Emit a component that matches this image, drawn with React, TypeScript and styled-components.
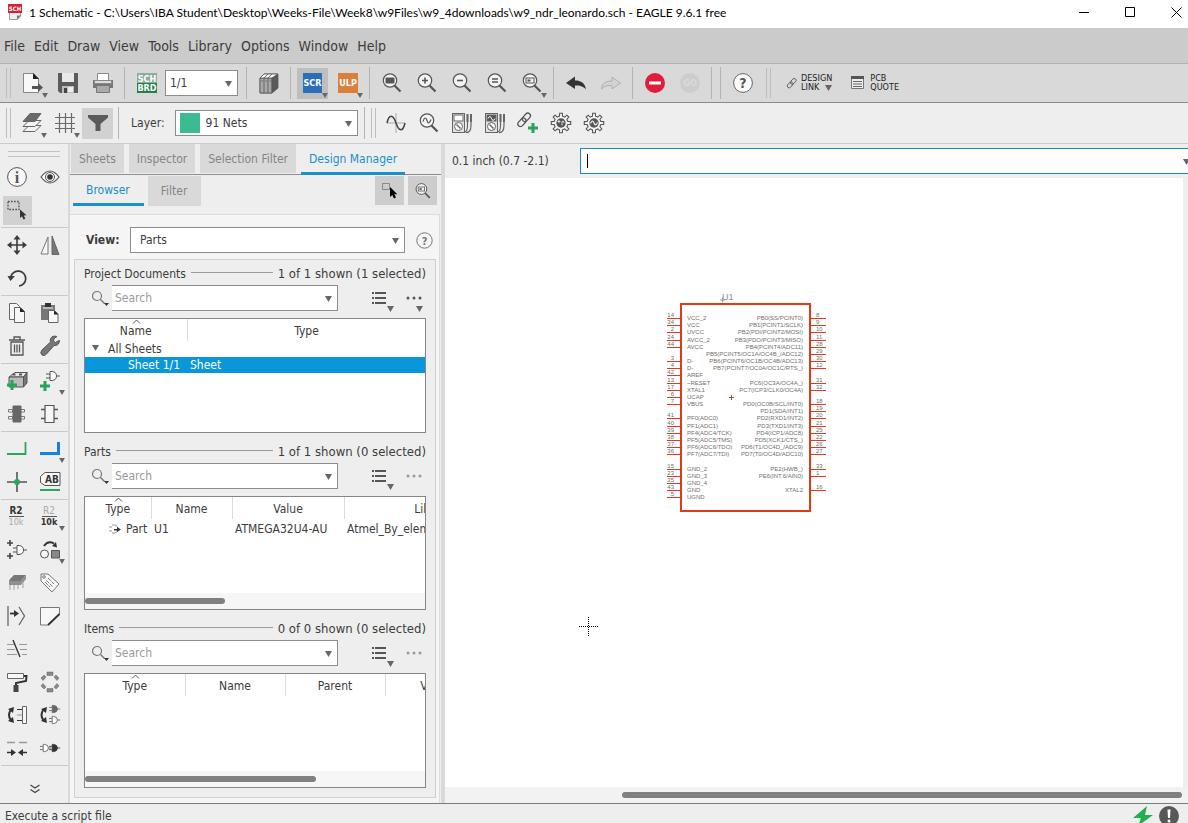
import React from "react";
import styled, { createGlobalStyle } from "styled-components";

const UI = `"DejaVu Sans Condensed", "Noto Sans", sans-serif`;

const Global = createGlobalStyle`
  *, *::before, *::after { box-sizing: border-box; }
  html, body { margin: 0; }
  body { font-family: ${UI}; font-size: 12px; line-height: 16px; color: #3c3c3c; background: #eee; }
  button, input, select { font: inherit; color: inherit; }
  button { padding: 0; border: 0; background: none; }
`;

/* ---------- shell ---------- */

const Shell = styled.div`
  display: flex;
  flex-direction: column;
  height: 100vh;
  min-height: 560px;
  overflow: hidden;
`;

const TitleBar = styled.header`
  flex: none;
  display: flex;
  align-items: center;
  height: 28px;
  padding: 0 0 4px 7px;
  background: #fff;
  color: #000;
`;

const Title = styled.h1`
  flex: 1;
  margin: 2px 0 0 6px;
  font: 400 12px/16px Lato, "Open Sans", sans-serif;
  white-space: nowrap;
`;

const WindowButtons = styled.div`
  display: flex;
  gap: 22px;
`;

const WindowButton = styled.button`
  display: grid;
  place-items: center;
  width: 24px;
  height: 24px;
`;

const MenuBar = styled.nav`
  flex: none;
  display: flex;
  align-items: center;
  gap: 9px;
  height: 36px;
  padding-left: 4px;
  background: #cbcbcb;
  border-bottom: 1px solid #b2b2b2;
  font-size: 14px;
`;

const Toolbar = styled.div<{ $light?: boolean }>`
  flex: none;
  display: flex;
  align-items: center;
  height: ${(p) => (p.$light ? 41 : 39)}px;
  padding-left: 6px;
  background: ${(p) => (p.$light ? "#eee" : "#d9d9d9")};
  border-bottom: 1px solid ${(p) => (p.$light ? "#ccc" : "#8a8a8a")};
`;

const Grip = styled.span`
  width: 5px;
  height: 30px;
  margin-right: 4px;
  border: solid #bdbdbd;
  border-width: 0 1px;
`;

const Rule = styled.span`
  width: 1px;
  height: 32px;
  margin: 0 4px;
  background: #b4b4b4;
`;

const Gap = styled.span<{ $w: number }>`
  flex: none;
  width: ${(p) => p.$w}px;
`;

const Tool = styled.button<{ $active?: boolean; $m?: number; $small?: boolean }>`
  position: relative;
  flex: none;
  display: grid;
  place-items: center;
  width: ${(p) => (p.$small ? 29 : 31)}px;
  height: ${(p) => (p.$small ? 29 : 31)}px;
  margin: 0 ${(p) => p.$m ?? 2}px;
  padding: ${(p) => (p.$small ? "0 1px 1px 0" : "0")};
  background: ${(p) => (p.$active ? "rgba(0, 0, 0, 0.12)" : "none")};
`;

const Corner = styled.svg`
  position: absolute;
  right: 0;
  bottom: 1px;
`;

const Art = styled.svg`
  display: block;
  overflow: visible;
`;

const WideTool = styled.button<{ $gap: number }>`
  display: flex;
  align-items: center;
  gap: ${(p) => p.$gap}px;
  color: #222;
  font-size: 9px;
  line-height: 9px;
  text-align: left;
`;

const WideLine = styled.span`
  display: flex;
  align-items: center;
  gap: 6px;
`;

const Field = styled.div<{ $w?: number; $focus?: boolean }>`
  position: relative;
  display: flex;
  align-items: center;
  flex: ${(p) => (p.$w ? "none" : "1")};
  width: ${(p) => (p.$w ? p.$w + "px" : "auto")};
  min-width: 0;
  height: 26px;
  overflow: hidden;
  background: #fff;
  border: 1px solid ${(p) => (p.$focus ? "#1d87c4" : "#8c8c8c")};
  border-right-width: ${(p) => (p.$focus ? 0 : 1)}px;
`;

const Select = styled.select<{ $indent?: number }>`
  flex: 1;
  width: 100%;
  height: 100%;
  padding: 0 20px 0 ${(p) => p.$indent ?? 4}px;
  border: 0;
  outline: 0;
  appearance: none;
  background: transparent;
`;

const TextInput = styled.input`
  width: 100%;
  height: 100%;
  padding: 0 20px 0 3px;
  border: 0;
  outline: 0;
  background: transparent;
  &::placeholder { color: #9a9a9a; opacity: 1; }
`;

const Drop = styled.svg<{ $right?: number }>`
  position: absolute;
  right: ${(p) => p.$right ?? 5}px;
  top: 10px;
  pointer-events: none;
`;

const Caret = styled.span`
  position: absolute;
  left: 6px;
  top: 5px;
  width: 1px;
  height: 14px;
  background: #000;
`;

const LayerLabel = styled.label`
  margin: 0 10px 0 8px;
`;

const Swatch = styled.span`
  flex: none;
  width: 20px;
  height: 20px;
  margin-left: 4px;
  background: #3dbb90;
`;

const Main = styled.main`
  flex: 1;
  display: flex;
  min-height: 0;
`;

/* ---------- palette ---------- */

const Palette = styled.aside`
  flex: none;
  width: 70px;
  padding: 7px 0 0 1px;
  overflow: hidden;
  border-right: 2px solid #d9d9d9;
`;

const PaletteGrip = styled.div`
  height: 6px;
  margin: 0 8px 4px 7px;
  border: solid #c4c4c4;
  border-width: 1px 0;
`;

const PaletteGroup = styled.div`
  display: grid;
  grid-template-columns: 33px 33px;
  grid-auto-rows: 33px;
  align-items: center;
  margin-bottom: 1px;
  border-bottom: 1px solid #c9c9c9;
`;

const More = styled.button`
  display: grid;
  place-items: center;
  width: 100%;
  height: 44px;
`;

/* ---------- side panel ---------- */

const Side = styled.section`
  flex: none;
  display: flex;
  flex-direction: column;
  width: 375px;
  border-right: 4px solid #d9d9d9;
`;

const Tabs = styled.div`
  flex: none;
  display: flex;
  align-items: flex-start;
  gap: 5px;
  height: 31px;
  padding-left: 1px;
  border-bottom: 1px solid #8f8f8f;
`;

const SubTabs = styled.div`
  flex: none;
  display: flex;
  gap: 4px;
  height: 39px;
  padding: 1px 4px 8px 3px;
`;

const Tab = styled.button<{ $on?: boolean }>`
  flex: none;
  height: ${(p) => (p.$on ? 31 : 29)}px;
  padding: ${(p) => (p.$on ? 2 : 0)}px 8px 0;
  white-space: nowrap;
  color: ${(p) => (p.$on ? "#1a8fcb" : "#858585")};
  background: ${(p) => (p.$on ? "none" : "#d9d9d9")};
  border-bottom: ${(p) => (p.$on ? "3px solid #1a8fcb" : "0")};
`;

const SubTab = styled(Tab)`
  height: 30px;
  padding: 0 14px 0 13px;
`;

const Spacer = styled.span`
  flex: 1;
`;

const SideButton = styled.button`
  display: grid;
  place-items: center;
  width: 29px;
  height: 29px;
  background: #cdcdcd;
`;

const Sheet = styled.div`
  flex: 1;
  display: flex;
  flex-direction: column;
  gap: 6px;
  min-height: 0;
  padding: 12px 3px 5px 4px;
  margin-right: 1px;
  background: #f5f5f5;
  border: 1px solid #dcdcdc;
  border-width: 1px 1px 0 0;
`;

const ViewRow = styled.div`
  flex: none;
  display: flex;
  align-items: center;
  padding: 0 3px 0 12px;
`;

const ViewLabel = styled.label`
  width: 44px;
  font-weight: 700;
`;

const HelpDot = styled.button`
  margin-left: 11px;
`;

const Group = styled.div`
  flex: 1;
  display: flex;
  flex-direction: column;
  gap: 9px;
  min-height: 0;
  padding: 4px 9px 9px;
  background: #eee;
  border: 1px solid #cfcfcf;
`;

const Block = styled.section`
  flex: 1 1 0;
  display: flex;
  flex-direction: column;
  min-height: 0;
`;

const BlockHead = styled.div`
  flex: none;
  display: flex;
  align-items: center;
  gap: 5px;
  height: 18px;
  padding-top: 2px;
  white-space: nowrap;
`;

const BlockTitle = styled.h2`
  margin: 0;
  font-size: 12px;
  font-weight: 400;
`;

const HeadLine = styled.span`
  flex: 1;
  height: 1px;
  margin-bottom: 3px;
  background: #9a9a9a;
`;

const Count = styled.span`
  font-size: 13px;
`;

const SearchRow = styled.div`
  flex: none;
  display: flex;
  align-items: center;
  margin: 3px 0 7px;
`;

const SearchIcon = styled.button`
  display: grid;
  align-items: center;
  width: 28px;
  height: 26px;
  padding-left: 8px;
`;

const SearchField = styled(Field)`
  border-left: 0;
`;

const RowTool = styled.button<{ $left: number }>`
  position: relative;
  display: grid;
  place-items: center;
  width: 20px;
  height: 26px;
  margin-left: ${(p) => p.$left}px;
`;

const RowDrop = styled.svg<{ $right: number }>`
  position: absolute;
  right: ${(p) => p.$right}px;
  bottom: -1px;
`;

const Box = styled.div`
  flex: 1;
  display: flex;
  flex-direction: column;
  min-height: 0;
  overflow: hidden;
  background: #fff;
  border: 1px solid #868686;
`;

const Grid = styled.table`
  flex: none;
  align-self: flex-start;
  table-layout: fixed;
  border-collapse: collapse;
`;

const Th = styled.th`
  position: relative;
  height: 22px;
  padding: 2px 0 0;
  font-weight: 400;
  border-right: 1px solid #dcdcdc;
`;

const SortMark = styled.svg`
  position: absolute;
  left: calc(50% - 4px);
  top: 0;
`;

const Row = styled.tr<{ $on?: boolean }>`
  color: ${(p) => (p.$on ? "#fff" : "inherit")};
  background: ${(p) => (p.$on ? "#0997d9" : "none")};
`;

const Td = styled.td<{ $indent?: number; $tall?: boolean }>`
  height: 16px;
  padding: ${(p) => (p.$tall ? 2 : 0)}px 0 0 ${(p) => p.$indent ?? 3}px;
  white-space: nowrap;
  line-height: 16px;
`;

const Inline = styled.span`
  display: flex;
  align-items: center;
  gap: 5px;
`;

const Track = styled.div`
  flex: none;
  height: 16px;
  margin-top: auto;
  padding: 5px 0;
  background: #f6f6f6;
`;

const Thumb = styled.div<{ $w: number }>`
  width: ${(p) => p.$w}px;
  height: 6px;
  border-radius: 3px;
  background: #808080;
`;

/* ---------- editor ---------- */

const Editor = styled.section`
  flex: 1;
  display: flex;
  flex-direction: column;
  min-width: 0;
`;

const CommandRow = styled.div`
  flex: none;
  display: flex;
  align-items: center;
  height: 34px;
  padding-left: 7px;
`;

const Coords = styled.label`
  width: 128px;
`;

const Canvas = styled.div`
  position: relative;
  flex: 1;
  min-height: 0;
  margin-right: 5px;
  overflow: hidden;
  background: #fff;
`;

const Placed = styled.svg<{ $x: number; $y: number }>`
  position: absolute;
  left: ${(p) => p.$x}px;
  top: ${(p) => p.$y}px;
`;

const CanvasTrack = styled.div`
  flex: none;
  display: flex;
  justify-content: flex-end;
  height: 16px;
  padding: 5px 6px 5px 0;
  background: #f2f2f2;
`;

const CanvasThumb = styled.div`
  width: 76%;
  height: 6px;
  border-radius: 3px;
  background: #808080;
`;

const StatusBar = styled.footer`
  flex: none;
  display: flex;
  align-items: flex-start;
  gap: 6px;
  height: 20px;
  overflow: hidden;
  padding: 2px 9px 0 5px;
  border-top: 1px solid #7c7c7c;
`;

const StatusText = styled.span`
  flex: 1;
  padding-top: 2px;
  line-height: 16px;
`;

/* ---------- icons ---------- */

const D = "#555";

const gear = (() => {
  const pts: string[] = [];
  for (let i = 0; i < 8; i++) {
    const a = (i * Math.PI) / 4;
    const steps: [number, number][] = [[-0.22, 7], [-0.14, 9.8], [0.14, 9.8], [0.22, 7]];
    for (const [da, r] of steps) {
      pts.push(`${(10 + r * Math.cos(a + da)).toFixed(2)},${(10 + r * Math.sin(a + da)).toFixed(2)}`);
    }
  }
  return pts.join(" ");
})();

const Lens = ({ children }: { children?: React.ReactNode }) => (
  <>
    <path d="M12.5 12.5 18.5 18.5" stroke={D} strokeWidth="2.2" />
    <circle cx="8" cy="7.5" r="6.7" fill="#f4f4f4" stroke={D} strokeWidth="1.2" />
    {children}
  </>
);

const Chain = () => (
  <g fill="none" stroke={D} strokeWidth="1.3" transform="rotate(-48 8 8)">
    <rect x="-1" y="5" width="10" height="5.6" rx="2.8" />
    <rect x="6" y="5" width="10" height="5.6" rx="2.8" />
  </g>
);

const Meter = ({ dark }: { dark?: boolean }) => (
  <g fill="none" stroke="#666">
    <rect x="0.5" y="0.5" width="12" height="19" fill="#e2e2e2" />
    <rect x="2" y="2" width="9" height="6" fill={dark ? "#555" : "#fff"} />
    {dark && <path d="M3 5.5q2-4 3.500 0t3.500 0" stroke="#fff" />}
    <circle cx="6.500" cy="13.500" r="4" fill="#fff" />
    <path d="M4.500 11.500l4 4" strokeWidth="1.400" />
    <path d="M15.500 1v11q0 7-3 7M19 1v11q0 8-5 7.500" strokeWidth="1.200" />
    <path d="M15.500 1v8M19 1v8" strokeWidth="2" />
  </g>
);

const Gate = ({ x, y, fill = "#fff", s = 1 }: { x: number; y: number; fill?: string; s?: number }) => (
  <g transform={`translate(${x} ${y}) scale(${s})`} stroke={fill === "#fff" ? D : fill} fill={fill}>
    <path d="M0 3h4M0 7h4M10 5h4" />
    <path d="M4 0.500h2q4.500 0.500 4.500 4.500t-4.500 4.500h-2z" />
  </g>
);

const Plus = ({ x, y, r = 5, c = "#27a35a" }: { x: number; y: number; r?: number; c?: string }) => (
  <path d={`M${x - r} ${y}h${2 * r}M${x} ${y - r}v${2 * r}`} stroke={c} strokeWidth={r > 3 ? 3 : 1.6} />
);

const Tag = ({ x, y, s, c, children, w = 700 }: { x: number; y: number; s: number; c: string; children: string; w?: number }) => (
  <text x={x} y={y} fontSize={s} fontWeight={w} fill={c} textAnchor="middle" fontFamily={UI}>
    {children}
  </text>
);

const art: Record<string, React.ReactNode> = {
  new: (
    <>
      <path d="M0.500 0.500h10l5 5v14h-15z" fill="#f8f8f8" stroke="#888" />
      <path d="M10 0v6h6z" fill="#222" />
      <path d="M9 13h6v-3l5 4.500-5 4.500v-3h-6z" fill={D} />
    </>
  ),
  save: (
    <>
      <path d="M0 0h20v20H2l-2-2z" fill="#5c5c5c" />
      <path d="M4 0h12v9H4z" fill="#e9e9e9" />
      <path d="M4 13h12v7H4z" fill="#bbb" />
      <path d="M6 15h3v5H6z" fill="#444" />
      <path d="M10 14h5v5h-5z" fill="#eee" />
    </>
  ),
  print: (
    <>
      <path d="M4.500 0.500h11v7h-11z" fill="#fff" stroke="#888" />
      <path d="M0 7h4v3h12V7h4v8H0z" fill="#777" />
      <path d="M1.500 7.500h17v3h-17z" fill="#ddd" stroke="#888" />
      <path d="M3.500 12.500h13v7h-13z" fill="#aaa" stroke="#777" />
    </>
  ),
  schbrd: (
    <>
      <path d="M0 0h20v10H0z" fill="#8fae99" />
      <path d="M0 10h20v10H0z" fill="#24804a" />
      <Tag x={10} y={9} s={9} c="#fff">SCH</Tag>
      <Tag x={10} y={18} s={9} c="#fff">BRD</Tag>
    </>
  ),
  library: (
    <g stroke="#555" strokeWidth="0.800">
      <path d="M1 5l4-4h13l-1 3v12l-4 4H1z" fill="#777" />
      <path d="M1 5h12v15H1zM5 5v15M9 5v15" fill="#a8a8a8" />
      <path d="M1 5l4-4h14l-5 4z" fill="#f2f2f2" />
      <path d="M5 5l4-4M9 5l4-4M2.500 8h1.500M6.500 8h1.500M10.500 8h1.500" fill="none" />
      <path d="M13 5l6-4v14l-6 5z" fill="#5a5a5a" />
    </g>
  ),
  scr: (
    <>
      <path d="M0 0h19v20H0z" fill="#2a6fb8" />
      <Tag x={9.5} y={13} s={9} c="#fff">SCR</Tag>
    </>
  ),
  ulp: (
    <>
      <path d="M0 0h20v20H0z" fill="#d9813c" />
      <Tag x={10} y={13} s={9} c="#fff">ULP</Tag>
    </>
  ),
  fit: <Lens><rect x="3.500" y="4.500" width="9" height="6" rx="1" fill="#555" /></Lens>,
  zin: <Lens><path d="M5 7.500h6M8 4.500v6" stroke={D} strokeWidth="1.600" /></Lens>,
  zout: <Lens><path d="M5 7.500h6" stroke={D} strokeWidth="1.600" /></Lens>,
  zeq: <Lens><path d="M5 6h6M5 9h6" stroke={D} strokeWidth="1.500" /></Lens>,
  zsel: (
    <Lens>
      <rect x="4" y="5" width="8" height="5" fill="none" stroke={D} />
      <path d="M5.500 6.500h3v2h-3z" fill={D} />
    </Lens>
  ),
  undo: <path d="M0 10 9 3.500V7.500C15 7.500 19 10 20 16.500 17 13 14 12.500 9 12.500V16z" fill="#333" />,
  redo: <path d="M19.500 10 11 4V8C5 8 1 10 0.500 16 3 13 6 12.500 11 12.500V16z" fill="#d2d2d2" stroke="#b0b0b0" />,
  stop: (
    <>
      <circle cx="10" cy="10" r="10" fill="#df1e3e" />
      <path d="M4 8.500h12v3H4z" fill="#fff" />
    </>
  ),
  go: (
    <>
      <circle cx="10" cy="10" r="10" fill="#cdcdcd" />
      <Tag x={10} y={13} s={9} c="#dadada">GO</Tag>
    </>
  ),
  help: (
    <>
      <circle cx="10" cy="10" r="9.400" fill="#fafafa" stroke="#666" />
      <Tag x={10} y={15} s={14} c="#555">?</Tag>
    </>
  ),
  layers: (
    <g stroke="#666" strokeLinejoin="round">
      <path d="M1 18.500 7 12.500h12l-6 6z" fill="#f4f4f4" />
      <path d="M1 13.500 7 7.500h12l-6 6z" fill="#f4f4f4" />
      <path d="M1 8.500 8 0.500h11l-6 8z" fill="#6a6a6a" />
    </g>
  ),
  grid: <path d="M4.500 0v20M10.500 0v20M16.500 0v20M0 4.500h20M0 10.500h20M0 15.500h20" stroke="#6a6a6a" strokeWidth="1.200" />,
  filter: <path d="M0 2h20v2.500L12.500 11v7h-5v-7L0 4.500z" fill="#5a5a5a" />,
  wave: (
    <>
      <path d="M10 0v20M1 10h18" stroke="#aaa" />
      <path d="M1 10C3 1 7 1 10 10s7 9 9 0" fill="none" stroke="#444" strokeWidth="1.500" />
    </>
  ),
  lenswave: (
    <Lens>
      <path d="M4 8.500c1.500-4.500 3-4.500 4-1s2.500 3 4-1" fill="none" stroke={D} strokeWidth="1.200" />
    </Lens>
  ),
  meter: <Meter />,
  meterDark: <Meter dark />,
  chainPlus: (
    <>
      <g transform="translate(-1 -1) scale(0.950)"><Chain /></g>
      <Plus x={15} y={15} />
    </>
  ),
  gearSource: (
    <>
      <polygon points={gear} fill="#f4f4f4" stroke={D} strokeWidth="1.100" />
      <circle cx="10" cy="10" r="4.700" fill={D} />
      <path d="M6.500 8.500h3M8 7v3M11 12.500v-4q2-1.500 2 1.500" stroke="#ddd" fill="none" />
    </>
  ),
  gearWave: (
    <>
      <polygon points={gear} fill="#f4f4f4" stroke={D} strokeWidth="1.100" />
      <circle cx="10" cy="10" r="4.700" fill={D} />
      <path d="M6.500 10.500q2-4.500 3.500-0.500t3.500-0.500" stroke="#eee" fill="none" strokeWidth="1.200" />
    </>
  ),
  info: (
    <>
      <circle cx="10" cy="10" r="9.400" fill="#f7f7f7" stroke="#555" />
      <text x="10" y="15.500" fontSize="16" fontWeight="700" textAnchor="middle" fill="#555" fontFamily="Liberation Serif, serif">i</text>
    </>
  ),
  eye: (
    <>
      <path d="M1 10q9-12 18 0q-9 12-18 0z" fill="#f7f7f7" stroke="#555" strokeWidth="1.200" />
      <circle cx="10" cy="10" r="4.500" fill="none" stroke="#555" />
      <circle cx="10" cy="10" r="2.800" fill="#333" />
    </>
  ),
  marquee: (
    <>
      <path d="M1 1.500h11v8H1z" fill="none" stroke="#555" strokeWidth="1.300" strokeDasharray="1.700 1.300" />
      <path d="M13 9.500v8.500l2-1.800 1.500 3.300 1.800-.8-1.500-3.200 2.700-.3z" fill="#333" />
    </>
  ),
  move: (
    <path d="M10 0l3.500 4.500h-2.700v4.700h4.700v-2.700l4.500 3.500-4.500 3.500v-2.700h-4.700v4.700h2.700l-3.500 4.500-3.500-4.500h2.700v-4.700h-4.700v2.700l-4.500-3.500 4.500-3.500v2.700h4.700v-4.700h-2.700z" fill="#3c3c3c" />
  ),
  mirror: (
    <>
      <path d="M8 2v17H1z" fill="#f7f7f7" stroke="#777" />
      <path d="M12 1v18.500h7z" fill="#777" stroke="#666" />
    </>
  ),
  rotate: (
    <>
      <path d="M4 8.500A7.500 7.500 0 1 1 12 18" fill="none" stroke="#3c3c3c" strokeWidth="1.700" />
      <path d="M0.500 8h7.500l-4.500 5z" fill="#3c3c3c" />
    </>
  ),
  copy: (
    <g fill="#f7f7f7" stroke="#666">
      <path d="M2.500 0.500h7l3 3v13h-10z" />
      <path d="M7.500 4.500h6l4 4v11h-10z" />
      <path d="M13 4.500v4.500h5z" fill="#222" stroke="none" />
    </g>
  ),
  paste: (
    <>
      <path d="M1 2h14v15H1z" fill="#777" />
      <path d="M5 0h6v4H5z" fill="#333" />
      <path d="M3 4h10v2H3z" fill="#bbb" />
      <path d="M8.500 7.500h6l3.500 3.500v8.500h-9.500z" fill="#f7f7f7" stroke="#666" />
      <path d="M14 7.500v4h4.500z" fill="#222" />
    </>
  ),
  trash: (
    <g fill="none" stroke="#555" strokeWidth="1.300">
      <path d="M2 4h16M7 3.500V1h6v2.500M4 6v13h12V6z" />
      <path d="M7.500 8.500v8M10 8.500v8M12.500 8.500v8" />
    </g>
  ),
  wrench: (
    <path d="M19 4.500l-3.500 2-2-1.500 0.500-2.500L17 0.500q-5-1.500-6.500 2.500-.5 1.500 0 3L2 14q-2.500 3 0 5 2.500 1.500 4.500-1L14 9.500q5 .5 5.500-5z" fill="#777" stroke="#555" />
  ),
  addPart: (
    <>
      <path d="M2 6l6-4.500h12l-3.500 4.500z" fill="#e8e8e8" stroke="#555" />
      <path d="M2 6h14.500v10H2z" fill="#bbb" stroke="#555" />
      <path d="M16.500 6L20 1.500V12l-3.500 4z" fill="#777" stroke="#555" />
      <path d="M5.500 3.500h3M12 3.500h3" stroke="#555" strokeWidth="2" />
      <Plus x={5} y={14} />
    </>
  ),
  addGate: (
    <>
      <Gate x={6} y={0} />
      <Plus x={5} y={15} />
    </>
  ),
  partDark: (
    <g stroke="#777" fill="#f7f7f7">
      <path d="M1.500 5.500h4v2.500h-4zM1.500 12.500h4v2.500h-4zM13.500 5.500h4v2.500h-4zM13.500 12.500h4v2.500h-4z" />
      <path d="M6 2h8v16H6z" fill="#666" stroke="#666" />
    </g>
  ),
  partLight: (
    <g stroke="#555" fill="#f7f7f7">
      <path d="M1 5.500h4M1 14.500h4M14 5.500h4M14 14.500h4" strokeWidth="1.600" />
      <path d="M5 1.500h9v17H5z" strokeWidth="1.200" />
    </g>
  ),
  net: <path d="M0 15h18.500V3" fill="none" stroke="#2ba65d" strokeWidth="1.800" />,
  bus: <path d="M0 14.500h18.500V3" fill="none" stroke="#1583dd" strokeWidth="3" />,
  junction: (
    <>
      <path d="M0 10h20M10 0v20" stroke="#555" strokeWidth="1.600" />
      <circle cx="10" cy="10" r="3" fill="#2ba65d" />
    </>
  ),
  label: (
    <>
      <path d="M5 0.500h15v13H5l-4.500-3v-6z" fill="#f7f7f7" stroke="#555" />
      <Tag x={12} y={11} s={10} c="#333">AB</Tag>
      <path d="M0 18h20" stroke="#2ba65d" strokeWidth="2" />
    </>
  ),
  name: (
    <>
      <Tag x={9} y={7} s={10} c="#333">R2</Tag>
      <path d="M2 9.500h15" stroke="#555" />
      <Tag x={9} y={18} s={9} c="#aaa" w={400}>10k</Tag>
    </>
  ),
  value: (
    <>
      <Tag x={9} y={7} s={10} c="#aaa" w={400}>R2</Tag>
      <path d="M2 9.500h15" stroke="#555" />
      <Tag x={9} y={18} s={9} c="#333">10k</Tag>
    </>
  ),
  gateSwap: (
    <>
      <Gate x={6} y={5} />
      <Plus x={3} y={3} r={3} c="#444" />
      <Plus x={3} y={16} r={3} c="#444" />
    </>
  ),
  replace: (
    <>
      <circle cx="4.500" cy="14" r="4" fill="#f7f7f7" stroke="#555" />
      <path d="M11.500 10.500h8v7.500h-8z" fill="#888" stroke="#555" />
      <path d="M4 6q4-6 10-2.500" stroke="#333" strokeWidth="2" fill="none" />
      <path d="M17 7.500l-5-1.500 4-4z" fill="#333" />
    </>
  ),
  bundle: (
    <>
      <path d="M3 6l4-4h12l-5 6H2z" fill="#777" />
      <path d="M2 8h12l5-6v4l-5 6H2z" fill="#8f8f8f" />
      <path d="M3 12v5M7 12v5M11 12v4M16 9v6" stroke="#bbb" strokeWidth="1.500" />
    </>
  ),
  tag: (
    <g fill="#f7f7f7" stroke="#777">
      <path d="M1 1h7l11 10-7 8L1 8z" />
      <circle cx="4" cy="4" r="1.300" />
      <path d="M8 5l6 6M6.500 7.500l6 6M5 9l5 5" strokeDasharray="4 1" />
    </g>
  ),
  split: (
    <>
      <path d="M1 0v20M12 1l5.500 9L12 19" fill="none" stroke="#666" strokeWidth="1.300" />
      <path d="M3 7.500h5" stroke="#333" strokeWidth="1.800" />
      <path d="M7 4l5 3.500L7 11z" fill="#333" />
    </>
  ),
  miter: (
    <>
      <path d="M0.500 1.500h19v7L8 19H0.500z" fill="#f7f7f7" stroke="#777" />
      <path d="M19.500 8L8 19" stroke="#333" strokeWidth="1.800" />
    </>
  ),
  slice: (
    <>
      <path d="M0 5.500h7M12 5.500h8M0 10.500h8M13 10.500h7M0 15.500h10M15 15.500h5" stroke="#999" />
      <path d="M6 1l7 17" stroke="#333" strokeWidth="1.400" />
    </>
  ),
  paint: (
    <>
      <path d="M0.500 1.500h16v5h-16z" fill="#f7f7f7" stroke="#666" />
      <path d="M17 4h2.500l-.500 5-10 2v3" fill="none" stroke="#333" strokeWidth="2" />
      <path d="M6.500 13h5v7h-5z" fill="#444" />
    </>
  ),
  ring: (
    <g fill="#888" stroke="#666" strokeWidth="0.500">
      <path d="M7 0h6v3.500H7zM7 16.500h6v3.500H7z" />
      <path d="M1 6l3-3 2 2-3 3.500zM19 6l-3-3-2 2 3 3.500zM1 14l3 3 2-2-3-3.500zM19 14l-3 3-2-2 3-3.500z" />
    </g>
  ),
  pinSwap: (
    <>
      <path d="M4 4.500q-4 5.500 0 11" fill="none" stroke="#333" strokeWidth="2" />
      <path d="M1 4l6-2-1 6zM1 16l6 2-1-6z" fill="#333" />
      <path d="M15.500 1.500h4v17h-4z" fill="#f7f7f7" stroke="#666" />
      <path d="M10 4.500h5M10 15.500h5" stroke="#333" />
      <path d="M10 10h5" stroke="#999" />
    </>
  ),
  gateFlip: (
    <>
      <path d="M3.500 4.500q-4 5.500 0 11" fill="none" stroke="#333" strokeWidth="2" />
      <path d="M1 4l6-2-1 6zM1 16l6 2-1-6z" fill="#333" />
      <Gate x={9} y={0} s={0.8} fill="#666" />
      <Gate x={9} y={11} s={0.8} />
    </>
  ),
  arrange: (
    <>
      <path d="M0 4.500h8M12 4.500h8" stroke="#999" strokeWidth="1.500" />
      <path d="M0 14.500h5M15 14.500h5" stroke="#333" strokeWidth="1.700" />
      <path d="M4 11l5 3.500L4 18zM16 11l-5 3.500 5 3.500z" fill="#333" />
    </>
  ),
  invoke: (
    <>
      <Gate x={0} y={6} s={0.8} />
      <Gate x={9} y={6} s={0.8} fill="#333" />
    </>
  ),
};

const Icon = ({ name }: { name: string }) => (
  <Art width="20" height="20" viewBox="0 0 20 20" aria-hidden="true">
    {art[name]}
  </Art>
);

const Triangle = <path d="M0 0h7l-3.500 6z" fill="#666" />;

const ToolButton = ({ name, label, drop, active, m, small }: { name: string; label: string; drop?: boolean; active?: boolean; m?: number; small?: boolean }) => (
  <Tool type="button" aria-label={label} $active={active} $m={m} $small={small}>
    <Icon name={name} />
    {drop && <Corner width="6" height="5" viewBox="0 0 7 6">{Triangle}</Corner>}
  </Tool>
);

/* ---------- data ---------- */

const menus = ["File", "Edit", "Draw", "View", "Tools", "Library", "Options", "Window", "Help"];

type P = [string, string, boolean?, boolean?] | null;

const palette: P[][] = [
  [["info", "Info"], ["eye", "Show"], ["marquee", "Group", false, true]],
  [["move", "Move"], ["mirror", "Mirror"], ["rotate", "Rotate"]],
  [["copy", "Copy"], ["paste", "Paste"], ["trash", "Delete"], ["wrench", "Change"]],
  [["addPart", "Add part"], ["addGate", "Add gate", true], ["partDark", "Replace part"], ["partLight", "Edit part"]],
  [["net", "Net"], ["bus", "Bus", true], ["junction", "Junction"], ["label", "Label"]],
  [
    ["name", "Name"], ["value", "Value", true], ["gateSwap", "Invoke"], ["replace", "Replace", true],
    ["bundle", "Module"], ["tag", "Attribute"], ["split", "Split"], ["miter", "Miter"],
    ["slice", "Slice"], null, ["paint", "Paint"], ["ring", "Array"],
    ["pinSwap", "Pin swap"], ["gateFlip", "Gate swap"], ["arrange", "Arrange"], ["invoke", "Invoke gate"],
  ],
];

type Pin = [number, string, string];

const leftPins: Pin[] = [
  [0, "14", "VCC_2"], [1, "34", "VCC"], [2, "2", "UVCC"], [3, "24", "AVCC_2"], [4, "44", "AVCC"],
  [6, "3", "D-"], [7, "4", "D-"], [8, "42", "AREF"], [9, "13", "~RESET"], [10, "17", "XTAL1"],
  [11, "6", "UCAP"], [12, "7", "VBUS"], [14, "41", "PF0(ADC0)"], [15, "40", "PF1(ADC1)"],
  [16, "39", "PF4(ADC4/TCK)"], [17, "38", "PF5(ADC5/TMS)"], [18, "37", "PF6(ADC6/TDO)"],
  [19, "36", "PF7(ADC7/TDI)"], [21, "15", "GND_2"], [22, "23", "GND_3"], [23, "35", "GND_4"],
  [24, "43", "GND"], [25, "5", "UGND"],
];

const rightPins: Pin[] = [
  [0, "8", "PB0(SS/PCINT0)"], [1, "9", "PB1(PCINT1/SCLK)"], [2, "10", "PB2(PDI/PCINT2/MOSI)"],
  [3, "11", "PB3(PDO/PCINT3/MISO)"], [4, "28", "PB4(PCINT4/ADC11)"], [5, "29", "PB5(PCINT5/OC1A/OC4B_/ADC12)"],
  [6, "30", "PB6(PCINT6/OC1B/OC4B/ADC13)"], [7, "12", "PB7(PCINT7/OC0A/OC1C/RTS_)"],
  [9, "31", "PC6(OC3A/OC4A_)"], [10, "32", "PC7(ICP3/CLK0/OC4A)"], [12, "18", "PD0(OC0B/SCL/INT0)"],
  [13, "19", "PD1(SDA/INT1)"], [14, "20", "PD2(RXD1/INT2)"], [15, "21", "PD3(TXD1/INT3)"],
  [16, "25", "PD4(ICP1/ADC8)"], [17, "22", "PD5(XCK1/CTS_)"], [18, "26", "PD6(T1/OC4D_/ADC9)"],
  [19, "27", "PD7(T0/OC4D/ADC10)"], [21, "33", "PE2(HWB_)"], [22, "1", "PE6(INT.6/AIN0)"], [24, "16", "XTAL2"],
];

const pinY = (i: number) => 28 + Math.round(i * 7.17);

const Chip = () => (
  <Placed $x={215} $y={112} width="175" height="230" viewBox="0 0 175 230" role="img" aria-label="ATMEGA32U4 symbol">
    <g fontFamily="Liberation Sans, sans-serif" fontSize="6" fill="#6f6f6f">
      <text x="62" y="10" fontSize="9" fill="#8c8c8c">U1</text>
      <path d="M60 10h5M62.500 7.500v5" stroke="#999" />
      {leftPins.map(([i, n, t]) => (
        <React.Fragment key={n}>
          <path d={`M7 ${pinY(i) + 0.5}h14`} stroke="#e0391d" />
          <text x="14" y={pinY(i) - 1} textAnchor="end">{n}</text>
          <text x="27" y={pinY(i) + 2}>{t}</text>
        </React.Fragment>
      ))}
      {rightPins.map(([i, n, t]) => (
        <React.Fragment key={n}>
          <path d={`M151 ${pinY(i) + 0.5}h15`} stroke="#e0391d" />
          <text x="156" y={pinY(i) - 1}>{n}</text>
          <text x="143" y={pinY(i) + 2} textAnchor="end">{t}</text>
        </React.Fragment>
      ))}
    </g>
    <rect x="21" y="14" width="129" height="207" fill="none" stroke="#e03a16" strokeWidth="2" />
    <path d="M69 107.500h5M71.500 105v5" stroke="#e0391d" />
  </Placed>
);

const Sort = () => (
  <SortMark width="9" height="5" viewBox="0 0 9 5">
    <path d="M1 4.500 4.500 1 8 4.500" fill="none" stroke="#555" />
  </SortMark>
);

const Cols = ({ widths }: { widths: number[] }) => (
  <colgroup>
    {widths.map((w, i) => <col key={i} style={{ width: w }} />)}
  </colgroup>
);

const Heads = ({ names }: { names: string[] }) => (
  <thead>
    <tr>
      {names.map((n, i) => <Th key={n} scope="col">{i === 0 && <Sort />}{n}</Th>)}
    </tr>
  </thead>
);

const total = (w: number[]) => w.reduce((a, b) => a + b, 0);

const Section = ({ title, count, dots, children }: { title: string; count: string; dots?: boolean; children: React.ReactNode }) => (
  <Block>
    <BlockHead>
      <BlockTitle>{title}</BlockTitle>
      <HeadLine />
      <Count>{count}</Count>
    </BlockHead>
    <SearchRow>
      <SearchIcon type="button" aria-label={`${title} search options`}>
        <svg width="18" height="16" viewBox="0 0 18 16" aria-hidden="true">
          <circle cx="5" cy="6" r="4.500" fill="none" stroke="#777" strokeWidth="1.200" />
          <path d="M8.500 9.500l4 4" stroke="#777" strokeWidth="1.400" />
          <path d="M12 13h5l-2.500 3z" fill="#333" />
        </svg>
      </SearchIcon>
      <SearchField $w={226}>
        <TextInput placeholder="Search" aria-label={`Search ${title}`} />
        <Drop width="7" height="6">{Triangle}</Drop>
      </SearchField>
      <RowTool type="button" aria-label="List view" $left={32}>
        <svg width="20" height="16" viewBox="0 0 20 16" aria-hidden="true">
          <path d="M2 3h2M5 3h11M2 8h2M5 8h11M2 13h2M5 13h11" stroke="#555" strokeWidth="2" />
        </svg>
        <RowDrop $right={-4} width="7" height="6">{Triangle}</RowDrop>
      </RowTool>
      <RowTool type="button" aria-label="More" $left={14}>
        <svg width="20" height="16" viewBox="0 0 20 16" aria-hidden="true">
          <g fill={dots ? "#555" : "#999"}>
            <circle cx="4" cy="8" r="1.500" /><circle cx="10" cy="8" r="1.500" /><circle cx="16" cy="8" r="1.500" />
          </g>
        </svg>
        {dots && <RowDrop $right={1} width="7" height="6">{Triangle}</RowDrop>}
      </RowTool>
    </SearchRow>
    {children}
  </Block>
);

const docCols = [102, 239];
const partCols = [66, 81, 112, 178];
const itemCols = [100, 100, 100, 100];

export default function App() {
  return (
    <Shell>
      <Global />
      <TitleBar>
        <svg width="16" height="16" viewBox="0 0 16 16" aria-hidden="true">
          <path d="M2.500 6h11v6l-3 3.500h-8z" fill="#eee" stroke="#999" />
          <path d="M10 15.500v-4h4z" fill="#777" />
          <path d="M1 0h14v9H1z" fill="#d5202f" />
          <Tag x={8} y={7} s={6} c="#fff">SCH</Tag>
        </svg>
        <Title>1 Schematic - C:\Users\IBA Student\Desktop\Weeks-File\Week8\w9Files\w9_4downloads\w9_ndr_leonardo.sch - EAGLE 9.6.1 free</Title>
        <WindowButtons>
          <WindowButton type="button" aria-label="Minimize"><svg width="11" height="11"><path d="M0 5.500h10" stroke="#000" /></svg></WindowButton>
          <WindowButton type="button" aria-label="Maximize"><svg width="11" height="11"><path d="M0.500 0.500h9v9h-9z" fill="none" stroke="#000" /></svg></WindowButton>
          <WindowButton type="button" aria-label="Close"><svg width="11" height="11"><path d="M0.500 0.500l10 10M10.500 0.500l-10 10" stroke="#000" /></svg></WindowButton>
        </WindowButtons>
      </TitleBar>

      <MenuBar>
        {menus.map((m) => <button type="button" key={m}>{m}</button>)}
      </MenuBar>

      <Toolbar>
        <Grip />
        <ToolButton name="new" label="New" drop />
        <ToolButton name="save" label="Save" />
        <ToolButton name="print" label="Print" />
        <Rule />
        <ToolButton name="schbrd" label="Switch to board" />
        <Gap $w={1} />
        <Field $w={73}>
          <Select aria-label="Sheet" defaultValue="1/1"><option>1/1</option></Select>
          <Drop width="7" height="6">{Triangle}</Drop>
        </Field>
        <Gap $w={4} />
        <Rule />
        <ToolButton name="library" label="Library manager" />
        <Rule />
        <ToolButton name="scr" label="Run script" drop active />
        <ToolButton name="ulp" label="Run ULP" drop />
        <Rule />
        <ToolButton name="fit" label="Zoom to fit" />
        <ToolButton name="zin" label="Zoom in" />
        <ToolButton name="zout" label="Zoom out" />
        <ToolButton name="zeq" label="Redraw" />
        <ToolButton name="zsel" label="Zoom select" drop />
        <Rule />
        <ToolButton name="undo" label="Undo" />
        <ToolButton name="redo" label="Redo" />
        <Rule />
        <ToolButton name="stop" label="Stop" />
        <ToolButton name="go" label="Go" />
        <Rule />
        <Rule />
        <ToolButton name="help" label="Help" />
        <Gap $w={6} />
        <Grip />
        <Gap $w={11} />
        <WideTool type="button" $gap={3}>
          <svg width="12" height="14" viewBox="-1 -1 18 18" aria-hidden="true"><Chain /></svg>
          <span>
            <WideLine>DESIGN</WideLine>
            <WideLine>LINK <svg width="7" height="6">{Triangle}</svg></WideLine>
          </span>
        </WideTool>
        <Gap $w={19} />
        <WideTool type="button" $gap={5}>
          <svg width="14" height="14" viewBox="0 0 14 14" aria-hidden="true">
            <path d="M0.500 0.500h12v12h-12z" fill="#eee" stroke="#777" />
            <path d="M0 0h13v3H0z" fill="#555" />
            <path d="M2 5.500h9M2 8h9M2 10.500h9" stroke="#666" />
          </svg>
          <span>
            <WideLine>PCB</WideLine>
            <WideLine>QUOTE</WideLine>
          </span>
        </WideTool>
      </Toolbar>

      <Toolbar $light>
        <Grip />
        <ToolButton name="layers" label="Layer settings" drop m={1} />
        <ToolButton name="grid" label="Grid" drop m={1} />
        <ToolButton name="filter" label="Selection filter" active m={1} />
        <Rule />
        <LayerLabel htmlFor="layer">Layer:</LayerLabel>
        <Field $w={183}>
          <Swatch />
          <Select id="layer" $indent={6} defaultValue="91 Nets"><option>91 Nets</option></Select>
          <Drop width="7" height="6">{Triangle}</Drop>
        </Field>
        <Gap $w={2} />
        <Rule />
        <Gap $w={2} />
        <Grip />
        <ToolButton name="wave" label="Simulate" m={1} />
        <ToolButton name="lenswave" label="Probe" m={1} />
        <ToolButton name="meter" label="Voltage probe" m={1} />
        <ToolButton name="meterDark" label="Current probe" m={1} />
        <ToolButton name="chainPlus" label="Map model" m={1} />
        <ToolButton name="gearSource" label="Source setup" m={1} />
        <ToolButton name="gearWave" label="Simulation setup" m={1} />
      </Toolbar>

      <Main>
        <Palette>
          <PaletteGrip />
          {palette.map((group, g) => (
            <PaletteGroup key={g}>
              {group.map((p, i) =>
                p ? <ToolButton key={i} name={p[0]} label={p[1]} drop={p[2]} active={p[3]} small /> : <span key={i} />
              )}
            </PaletteGroup>
          ))}
          <More type="button" aria-label="More tools">
            <svg width="10" height="10"><path d="M0.500 1l4.500 3 4.500-3M0.500 5.500l4.500 3 4.500-3" fill="none" stroke="#444" strokeWidth="1.300" /></svg>
          </More>
        </Palette>

        <Side>
          <Tabs role="tablist">
            <Tab type="button" role="tab">Sheets</Tab>
            <Tab type="button" role="tab">Inspector</Tab>
            <Tab type="button" role="tab">Selection Filter</Tab>
            <Tab type="button" role="tab" aria-selected $on>Design Manager</Tab>
          </Tabs>
          <SubTabs role="tablist">
            <SubTab type="button" role="tab" aria-selected $on>Browser</SubTab>
            <SubTab type="button" role="tab">Filter</SubTab>
            <Spacer />
            <SideButton type="button" aria-label="Select in editor">
              <svg width="20" height="20" viewBox="0 0 20 20">
                <path d="M2.500 2.500h7v6h-7z" fill="none" stroke="#888" />
                <path d="M10 6v10l2.300-2 1.700 3.500 2-1-1.700-3.300h3z" fill="#000" />
              </svg>
            </SideButton>
            <SideButton type="button" aria-label="Zoom to selection">
              <svg width="16" height="16" viewBox="0 0 20 20">{art.zsel}</svg>
            </SideButton>
          </SubTabs>
          <Sheet>
            <ViewRow>
              <ViewLabel htmlFor="view">View:</ViewLabel>
              <Field>
                <Select id="view" $indent={9} defaultValue="Parts"><option>Parts</option></Select>
                <Drop width="7" height="6">{Triangle}</Drop>
              </Field>
              <HelpDot type="button" aria-label="Help">
                <Art width="17" height="17" viewBox="0 0 17 17">
                  <circle cx="8.500" cy="8.500" r="7.700" fill="none" stroke="#777" />
                  <Tag x={8.5} y={12.5} s={11} c="#777">?</Tag>
                </Art>
              </HelpDot>
            </ViewRow>
            <Group>
              <Section title="Project Documents" count="1 of 1 shown (1 selected)" dots>
                <Box>
                  <Grid style={{ width: total(docCols) }}>
                    <Cols widths={docCols} />
                    <Heads names={["Name", "Type"]} />
                    <tbody>
                      <Row>
                        <Td $indent={7}>
                          <Inline><svg width="11" height="8">{Triangle}</svg>All Sheets</Inline>
                        </Td>
                        <Td />
                      </Row>
                      <Row $on>
                        <Td $indent={43}>Sheet 1/1</Td>
                        <Td>Sheet</Td>
                      </Row>
                    </tbody>
                  </Grid>
                </Box>
              </Section>
              <Section title="Parts" count="1 of 1 shown (0 selected)">
                <Box>
                  <Grid style={{ width: total(partCols) }}>
                    <Cols widths={partCols} />
                    <Heads names={["Type", "Name", "Value", "Library"]} />
                    <tbody>
                      <Row>
                        <Td $indent={24} $tall>
                          <Inline>
                            <svg width="12" height="10" viewBox="0 0 12 10">
                              <path d="M0 3h3M0 7h3M3 1h3q3 1 3 4t-3 4H3" fill="none" stroke="#999" />
                              <path d="M5 5h3V3l4 2.500-4 2.500V6.500H5z" fill="#333" />
                            </svg>
                            Part
                          </Inline>
                        </Td>
                        <Td $tall>U1</Td>
                        <Td $tall>ATMEGA32U4-AU</Td>
                        <Td $tall>Atmel_By_element14</Td>
                      </Row>
                    </tbody>
                  </Grid>
                  <Track><Thumb $w={140} /></Track>
                </Box>
              </Section>
              <Section title="Items" count="0 of 0 shown (0 selected)">
                <Box>
                  <Grid style={{ width: total(itemCols) }}>
                    <Cols widths={itemCols} />
                    <Heads names={["Type", "Name", "Parent", "Value"]} />
                  </Grid>
                  <Track><Thumb $w={231} /></Track>
                </Box>
              </Section>
            </Group>
          </Sheet>
        </Side>

        <Editor>
          <CommandRow>
            <Coords htmlFor="command">0.1 inch (0.7 -2.1)</Coords>
            <Field $focus>
              <TextInput id="command" />
              <Caret />
              <Drop $right={-2} width="7" height="6">{Triangle}</Drop>
            </Field>
          </CommandRow>
          <Canvas>
            <Chip />
            <Placed $x={134} $y={439} width="19" height="19" viewBox="0 0 19 19" aria-hidden="true">
              <path d="M0 9.500h19M9.500 0v19" stroke="#000" strokeDasharray="1 1" />
            </Placed>
          </Canvas>
          <CanvasTrack><CanvasThumb /></CanvasTrack>
        </Editor>
      </Main>

      <StatusBar>
        <StatusText>Execute a script file</StatusText>
        <svg width="20" height="20" viewBox="0 0 20 20" aria-hidden="true">
          <path d="M14 0L0 12h8l-3 8 15-11h-8z" fill="#22ad52" />
        </svg>
        <svg width="20" height="20" viewBox="0 0 20 20" aria-hidden="true">
          <circle cx="10" cy="10" r="10" fill="#585858" />
          <path d="M8.500 3.500h3l-.500 8.500h-2z" fill="#fff" />
          <circle cx="10" cy="15" r="1.500" fill="#fff" />
        </svg>
      </StatusBar>
    </Shell>
  );
}
